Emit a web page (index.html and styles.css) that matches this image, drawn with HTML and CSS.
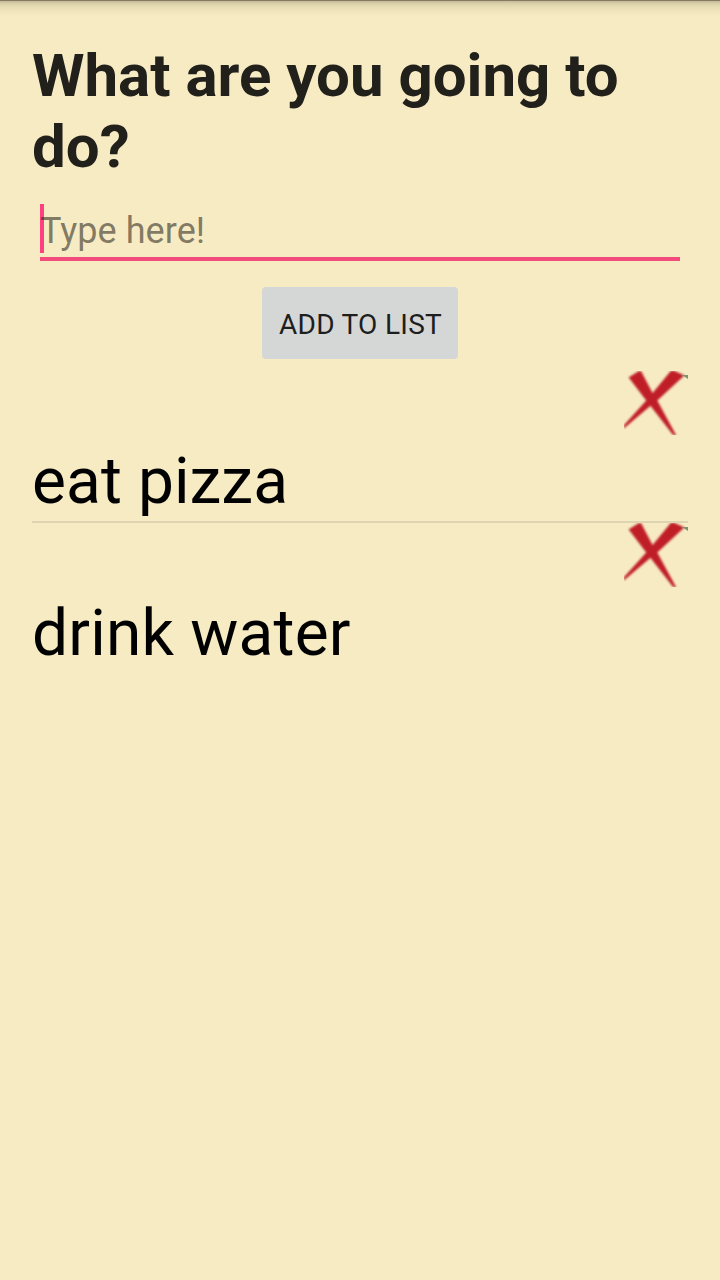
FILE: index.html
```html
<!DOCTYPE html>
<html lang="en">
<head>
<meta charset="utf-8">
<title>To-do list</title>
<link rel="stylesheet" href="styles.css">
</head>
<body>
<main class="screen">
  <h1 class="title">What are you going to do?</h1>
  <div class="field"><span class="hint">Type here!</span></div>
  <button class="add" type="button">ADD TO LIST</button>
  <ul class="list">
    <li class="item">
      <svg class="cross" viewBox="0 0 64 64" aria-hidden="true"><path class="stroke" d="M5 6.500L15 0.300L17 0.500L28.500 22.500L47 0L50 0L60 4.500L33 29.500L52 64.500L49 63.500L26.500 34.500L0 57L0 54.500L22.500 29.500Z"/><path class="nick" d="M58 4L64 4V8L61 6Z"/></svg>
      <span class="label">eat pizza</span>
    </li>
    <li class="item">
      <svg class="cross" viewBox="0 0 64 64" aria-hidden="true"><path class="stroke" d="M5 6.500L15 0.300L17 0.500L28.500 22.500L47 0L50 0L60 4.500L33 29.500L52 64.500L49 63.500L26.500 34.500L0 57L0 54.500L22.500 29.500Z"/><path class="nick" d="M58 4L64 4V8L61 6Z"/></svg>
      <span class="label label-wide">drink water</span>
    </li>
  </ul>
</main>
</body>
</html>
```
FILE: styles.css
```css
body {
  margin: 0;
  background: #f7ebc4;
  font-family: Roboto, sans-serif;
}
.screen {
  box-sizing: border-box;
  min-height: 1280px;
  padding: 40px 32px 0;
  display: flex;
  flex-direction: column;
  background: linear-gradient(#857b62 0, #857b62 1px, #c5ba98 1px, #dcd2ac 4px, #eae0b7 8px, #f7ebc4 16px);
}
.title {
  margin: 0;
  font-size: 60px;
  line-height: 71px;
  font-weight: 700;
  color: #21201b;
}
.field {
  box-sizing: border-box;
  height: 57px;
  margin: 22px 8px 0;
  border-bottom: 4px solid #f24b7c;
}
.hint {
  display: block;
  height: 49px;
  border-left: 4px solid #ff4081;
  font-size: 36px;
  line-height: 54px;
  text-indent: -4px;
  letter-spacing: 0.05px;
  color: rgba(50, 46, 34, 0.6);
}
.add {
  align-self: center;
  width: 196px;
  height: 72px;
  margin-top: 26px;
  padding: 3px 0 0 1px;
  border: 0;
  border-radius: 4px;
  background: #d5d7d6;
  font: 28px Roboto, sans-serif;
  letter-spacing: 0.28px;
  color: #1d1e1d;
}
.list {
  margin: 12px 0 0;
  padding: 0;
  list-style: none;
}
.item {
  display: flex;
  flex-direction: column;
  height: 150px;
}
.item + .item {
  border-top: 2px solid #ded4b1;
}
.cross {
  align-self: flex-end;
  width: 64px;
  height: 64px;
  overflow: hidden;
}
.stroke {
  fill: #bf1e27;
  stroke: #bf1e27;
  stroke-width: 0.6px;
  filter: blur(0.8px);
}
.nick {
  fill: #7c9270;
  filter: blur(0.6px);
}
.label {
  font-size: 64px;
  line-height: 75px;
  margin-top: 9px;
  letter-spacing: 0.08px;
  color: #000;
}
.label-wide {
  letter-spacing: 0.2px;
}
```
